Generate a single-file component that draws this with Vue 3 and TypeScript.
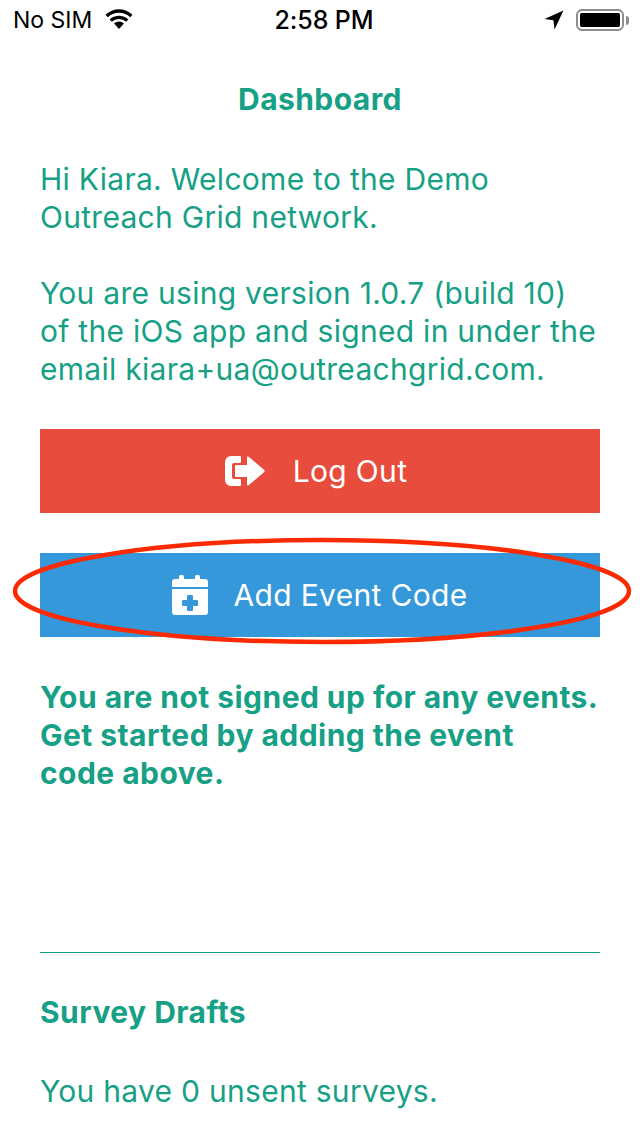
<script setup lang="ts">
const title = 'Dashboard'
</script>

<template>
  <div class="screen">
    <header class="status">
      <div class="status-left">
        <span>No SIM</span>
        <svg class="wifi" width="28" height="20" viewBox="1.500 1.500 25 18.500">
          <path d="M14 20l-4.600-5a6.500 6.500 0 0 1 9.200 0z" fill="#000" />
          <path d="M7.400 13.400a9.500 9.500 0 0 1 13.200 0l2.100-2.300a12.700 12.700 0 0 0-17.400 0z" fill="#000" />
          <path d="M3.600 9.200a15 15 0 0 1 20.800 0l2.100-2.400a18 18 0 0 0-25 0z" fill="#000" />
        </svg>
      </div>
      <span class="time">2:58 PM</span>
      <div class="status-right">
        <svg width="20" height="20" viewBox="0 0 18 18"><path d="M17.500.5L.5 8.200l8 1 1 8.300z" fill="#000" /></svg>
        <div class="battery"><div class="battery-fill"></div></div>
        <div class="battery-cap"></div>
      </div>
    </header>

    <main class="content">
      <h1 class="title">{{ title }}</h1>
      <p class="text">Hi Kiara. Welcome to the Demo<br />Outreach Grid network.</p>
      <p class="text para">You are using version 1.0.7 (build 10)<br />of the iOS app and signed in under the<br />email kiara+ua@outreachgrid.com.</p>

      <button class="btn red">
        <svg class="icon" width="40" height="30" viewBox="0 0 40 30">
          <path d="M6 0h9a1 1 0 0 1 1 1v5a1 1 0 0 1-1 1H9a2 2 0 0 0-2 2v12a2 2 0 0 0 2 2h6a1 1 0 0 1 1 1v5a1 1 0 0 1-1 1H6a6 6 0 0 1-6-6V6a6 6 0 0 1 6-6z" fill="#fff" />
          <path d="M11 9h11V1.500a1 1 0 0 1 1.700-.7L39 13.800a1.600 1.600 0 0 1 0 2.400L23.700 29.200a1 1 0 0 1-1.700-.7V21H11a1 1 0 0 1-1-1v-10a1 1 0 0 1 1-1z" fill="#fff" />
        </svg>
        <span class="label logout">Log Out</span>
      </button>

      <div class="event-wrap">
        <button class="btn blue">
          <svg class="icon cal" width="36" height="40" viewBox="0 0 36 40">
            <rect x="7" y="0" width="5" height="8" rx="1.500" fill="#fff" />
            <rect x="23" y="0" width="5" height="8" rx="1.500" fill="#fff" />
            <path d="M3 4h30a3 3 0 0 1 3 3v5H0V7a3 3 0 0 1 3-3z" fill="#fff" />
            <path d="M0 14h36v23a3 3 0 0 1-3 3H3a3 3 0 0 1-3-3z" fill="#fff" />
            <path d="M16 20h4a1 1 0 0 1 1 1v4h4a1 1 0 0 1 1 1v4a1 1 0 0 1-1 1h-4v4a1 1 0 0 1-1 1h-4a1 1 0 0 1-1-1v-4h-4a1 1 0 0 1-1-1v-4a1 1 0 0 1 1-1h4v-4a1 1 0 0 1 1-1z" fill="#3498db" />
          </svg>
          <span class="label">Add Event Code</span>
        </button>
        <svg class="ring" width="640" height="120" viewBox="0 0 640 120">
          <ellipse cx="322" cy="61" rx="307" ry="51" fill="none" stroke="#fb2a00" stroke-width="4.500" />
        </svg>
      </div>

      <p class="text strong">You are not signed up for any events.<br />Get started by adding the event<br />code above.</p>

      <hr class="rule" />

      <h2 class="drafts">Survey Drafts</h2>
      <p class="text unsent">You have 0 unsent surveys.</p>
    </main>
  </div>
</template>

<style>
html, body { margin: 0; background: #fff; }
</style>

<style scoped>
.screen {
  width: 640px;
  height: 1136px;
  overflow: hidden;
  background: #fff;
  font-family: Inter, "Liberation Sans", sans-serif;
  color: #16a085;
}
.status {
  height: 40px;
  display: grid;
  grid-template-columns: 1fr auto 1fr;
  align-items: center;
  padding: 0 11px 0 13px;
  color: #000;
  font-size: 23px;
}
.status-left { display: flex; align-items: center; gap: 13px; }
.wifi { margin-top: -2px; }
.time { margin-left: 6px; font-size: 25px; font-weight: 500; letter-spacing: -0.1px; }
.status-right { display: flex; align-items: center; justify-content: flex-end; }
.battery {
  width: 48px;
  height: 22px;
  box-sizing: border-box;
  margin-left: 12px;
  padding: 2px;
  border: 2px solid #8e8e8e;
  border-radius: 6px;
}
.battery-fill { width: 100%; height: 100%; background: #000; border-radius: 2px; }
.battery-cap { width: 3px; height: 9px; margin-left: 2px; background: #8e8e8e; border-radius: 0 3px 3px 0; }
.content { padding: 0 40px; }
.title {
  margin: 39px 0 0;
  text-align: center;
  font-size: 30px;
  line-height: 40px;
  font-weight: 700;
  letter-spacing: 0.44px;
}
.text {
  margin: 41px 0 0;
  font-size: 30px;
  line-height: 38px;
  font-weight: 400;
  letter-spacing: 0.28px;
  white-space: nowrap;
}
.para { margin-top: 38px; }
.btn {
  width: 560px;
  height: 84px;
  display: flex;
  align-items: center;
  justify-content: center;
  border: 0;
  padding: 0;
  color: #fff;
  font: inherit;
  font-size: 30px;
  letter-spacing: 0.33px;
}
.red { background: #e74c3c; margin-top: 41px; }
.blue { background: #3498db; }
.icon { margin-right: 28px; flex: none; }
.cal { margin-right: 25px; }
.logout { margin-right: 8px; }
.event-wrap { position: relative; margin-top: 40px; }
.ring { position: absolute; left: -40px; top: -23px; pointer-events: none; }
.strong { margin-top: 41px; font-weight: 700; letter-spacing: 0.45px; }
.rule { margin: 160px 0 0; border: 0; border-top: 1px solid #16a085; }
.drafts { margin: 39px 0 0; font-size: 30px; line-height: 40px; font-weight: 700; letter-spacing: 0.46px; }
.unsent { margin-top: 40px; }
</style>
